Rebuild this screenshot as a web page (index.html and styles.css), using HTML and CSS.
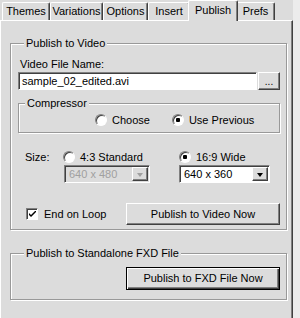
FILE: index.html
```html
<!DOCTYPE html>
<html>
<head>
    <title>Publish</title>
    <link rel="stylesheet" href="styles.css">
</head>
<body>
    <div class="dialog">
        <div class="tabs">
            <div class="tab tab-themes">Themes</div>
            <div class="tab tab-variations">Variations</div>
            <div class="tab tab-options">Options</div>
            <div class="tab tab-insert">Insert</div>
            <div class="tab tab-publish active">Publish</div>
            <div class="tab tab-prefs">Prefs</div>
        </div>

        <div class="panel">
            <div class="group video-group">
                <div class="group-title">Publish to Video</div>
                <div class="label">Video File Name:</div>
                <div class="file-row">
                    <div class="textbox">sample_02_edited.avi</div>
                    <div class="btn browse">...</div>
                </div>

                <div class="group compressor">
                    <div class="group-title">Compressor</div>
                    <div class="radio-row">
                        <div class="option"><span class="radio"></span>Choose</div>
                        <div class="option"><span class="radio checked"></span>Use Previous</div>
                    </div>
                </div>

                <div class="size-grid">
                    <div class="size-label">Size:</div>
                    <div class="option"><span class="radio"></span>4:3 Standard</div>
                    <div class="option"><span class="radio checked"></span>16:9 Wide</div>
                    <div></div>
                    <div class="combo disabled">
                        <span class="combo-text">640 x 480</span>
                        <span class="combo-arrow"></span>
                    </div>
                    <div class="combo">
                        <span class="combo-text">640 x 360</span>
                        <span class="combo-arrow"></span>
                    </div>
                </div>

                <div class="action-row">
                    <div class="option check-option">
                        <span class="checkbox">
                            <svg width="7" height="7" viewBox="0 0 7 7"><path d="M0 2 L0 4 L2 6 L7 1 L7 -1 L2 4 Z" fill="#000"/></svg>
                        </span>
                        End on Loop
                    </div>
                    <div class="btn wide">Publish to Video Now</div>
                </div>
            </div>

            <div class="group fxd-group">
                <div class="group-title">Publish to Standalone FXD File</div>
                <div class="action-row">
                    <div class="btn wide default">Publish to FXD File Now</div>
                </div>
            </div>
        </div>
    </div>
</body>
</html>
```

FILE: styles.css
```css
body {
    margin: 0;
    background: #ececec;
    font-family: "Liberation Sans", Arial, sans-serif;
    font-size: 11px;
    color: #000;
}
.dialog {
    width: 293px;
}

/* tab strip */
.tabs {
    display: flex;
    align-items: flex-end;
    height: 20px;
    padding-left: 2px;
    background: #dcdcdc;
}
.tab {
    box-sizing: border-box;
    height: 18px;
    line-height: 17px;
    text-align: center;
    background: #dcdcdc;
    border-top: 1px solid #fff;
    border-left: 1px solid #fff;
    border-right: 1px solid #404040;
    border-radius: 2px 2px 0 0;
    box-shadow: inset -1px 0 #808080;
}
.tab.active {
    position: relative;
    z-index: 1;
    height: 21px;
    line-height: 18px;
    margin: 0 -2px -1px;
}
.tab-themes { width: 48px; }
.tab-variations { width: 53px; }
.tab-options { width: 45px; }
.tab-insert { width: 42px; }
.tab-publish { width: 50px; }
.tab-prefs { width: 39px; }

.panel {
    box-sizing: border-box;
    height: 298px;
    padding: 22px 5px 0 9px;
    background: #dcdcdc;
    border-top: 1px solid #fff;
    border-left: 1px solid #fff;
    border-right: 1px solid #404040;
    box-shadow: inset -1px 0 #808080;
}

/* etched group box */
.group {
    border: 1px solid #999;
    box-shadow: inset 1px 1px #fff, 1px 1px #fff;
}
.group-title {
    width: fit-content;
    margin: -7px 0 0 6px;
    padding: 0 2px;
    line-height: 13px;
    background: #dcdcdc;
}
.video-group {
    padding: 0 6px 4px 7px;
}
.fxd-group {
    margin-top: 23px;
    padding: 0 6px 9px 7px;
}
.fxd-group .action-row {
    margin-top: 7px;
}

.label {
    margin-top: 8px;
    padding-left: 2px;
    line-height: 13px;
}
.file-row {
    display: flex;
    margin-top: 1px;
    height: 18px;
}
.textbox {
    flex: 1;
    padding-left: 3px;
    line-height: 16px;
    background: #fff;
    border: 1px solid;
    border-color: #808080 #fff #fff #808080;
    box-shadow: inset 1px 1px #404040;
    white-space: nowrap;
}

/* buttons */
.btn {
    box-sizing: border-box;
    text-align: center;
    background: #dcdcdc;
    border: 1px solid;
    border-color: #fff #404040 #404040 #fff;
    box-shadow: inset -1px -1px #808080;
}
.btn.default {
    border-color: #000;
    box-shadow: inset 1px 1px #fff, inset -1px -1px #404040, inset -2px -2px #808080;
}
.browse {
    width: 22px;
    margin-left: 1px;
    line-height: 18px;
    font-size: 10px;
}
.wide {
    width: 154px;
    height: 22px;
    line-height: 20px;
    margin-left: auto;
}
.fxd-group .wide {
    height: 23px;
    line-height: 21px;
}

.compressor {
    margin-top: 13px;
    padding-bottom: 5px;
}
.radio-row {
    display: flex;
    gap: 22px;
    margin-top: 3px;
    padding-left: 76px;
    height: 14px;
}

.option {
    display: flex;
    align-items: center;
    gap: 5px;
    line-height: 14px;
}
.radio {
    box-sizing: border-box;
    width: 12px;
    height: 12px;
    border-radius: 50%;
    background: #fff;
    border: 1px solid;
    border-color: #808080 #fff #fff #808080;
    box-shadow: inset 1px 1px #404040;
}
.radio.checked {
    background: radial-gradient(circle at 5px 5px, #000 2px, #fff 2.5px);
}

.size-grid {
    display: grid;
    grid-template-columns: 45px 116px 91px;
    row-gap: 1px;
    margin-top: 17px;
}
.size-label {
    padding-left: 7px;
    line-height: 14px;
}
.combo {
    box-sizing: border-box;
    display: flex;
    height: 18px;
    background: #fff;
    border: 1px solid;
    border-color: #808080 #fff #fff #808080;
    box-shadow: inset 1px 1px #404040;
    padding: 1px;
}
.combo.disabled {
    margin-left: 1px;
    width: 86px;
    background: #dcdcdc;
    color: #a0a0a0;
}
.combo-text {
    flex: 1;
    padding-left: 3px;
    line-height: 14px;
}
.combo-arrow {
    box-sizing: border-box;
    width: 16px;
    background: #dcdcdc;
    border: 1px solid;
    border-color: #fff #404040 #404040 #fff;
    box-shadow: inset -1px -1px #808080;
    display: flex;
    align-items: center;
    justify-content: center;
}
.combo-arrow::after {
    content: "";
    border-top: 4px solid #000;
    border-left: 3.5px solid transparent;
    border-right: 3.5px solid transparent;
    margin-top: 1px;
}
.disabled .combo-arrow::after {
    border-top-color: #a0a0a0;
}

.action-row {
    display: flex;
    align-items: center;
    margin-top: 20px;
}
.check-option {
    padding-left: 8px;
    gap: 6px;
}
.checkbox {
    box-sizing: border-box;
    width: 12px;
    height: 12px;
    display: flex;
    align-items: center;
    justify-content: center;
    background: #fff;
    border: 1px solid;
    border-color: #808080 #fff #fff #808080;
    box-shadow: inset 1px 1px #404040;
    padding: 1px 0 0 1px;
}
```
